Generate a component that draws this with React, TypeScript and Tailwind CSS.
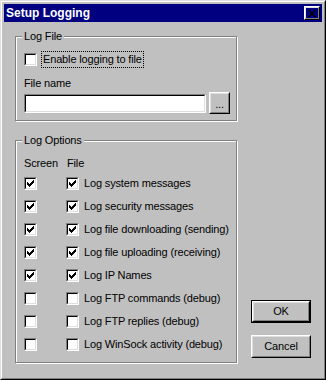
const rows = [
  { label: "Log system messages", on: true },
  { label: "Log security messages", on: true },
  { label: "Log file downloading (sending)", on: true },
  { label: "Log file uploading (receiving)", on: true },
  { label: "Log IP Names", on: true },
  { label: "Log FTP commands (debug)", on: false },
  { label: "Log FTP replies (debug)", on: false },
  { label: "Log WinSock activity (debug)", on: false },
];

const CheckMark = () => (
  <svg width="7" height="7" viewBox="0 0 7 7" shapeRendering="crispEdges">
    <path
      d="M6 0h1v1h-1z M5 1h2v1h-2z M0 2h1v1h-1z M4 2h3v1h-3z M0 3h2v1h-2z M3 3h3v1h-3z M0 4h5v1h-5z M1 5h3v1h-3z M2 6h1v1h-1z"
      fill="#000"
    />
  </svg>
);

const CloseGlyph = () => (
  <svg width="8" height="7" viewBox="0 0 8 7" shapeRendering="crispEdges">
    <path
      d="M0 0h2v1h-2z M6 0h2v1h-2z M1 1h2v1h-2z M5 1h2v1h-2z M2 2h4v1h-4z M3 3h2v1h-2z M2 4h4v1h-4z M1 5h2v1h-2z M5 5h2v1h-2z M0 6h2v1h-2z M6 6h2v1h-2z"
      fill="#000"
    />
  </svg>
);

const Check = ({ checked }: { checked: boolean }) => (
  <span className="flex h-[13px] w-[13px] shrink-0 border border-t-[#808080] border-l-[#808080] border-r-white border-b-white">
    <span className="flex flex-1 items-center justify-center border border-t-black border-l-black border-r-[#dfdfdf] border-b-[#dfdfdf] bg-white">
      {checked && <CheckMark />}
    </span>
  </span>
);

const Raised = ({ children, className }: { children: React.ReactNode; className: string }) => (
  <div className={`flex border border-t-white border-l-white border-r-black border-b-black ${className}`}>
    <div className="flex flex-1 items-center justify-center border border-t-[#dfdfdf] border-l-[#dfdfdf] border-r-[#808080] border-b-[#808080]">
      {children}
    </div>
  </div>
);

export default function App() {
  return (
    <div className="h-[380px] w-[326px] border border-t-[#dfdfdf] border-l-[#dfdfdf] border-r-black border-b-black bg-[#c0c0c0] font-['Liberation_Sans',Arial,sans-serif] text-[11px] leading-[13px] tracking-[-0.15px] text-black">
      <div className="flex h-full flex-col border border-t-white border-l-white border-r-[#808080] border-b-[#808080] p-[2px]">
        <div className="flex h-[18px] items-center justify-between bg-[#000080] pl-[2px] pr-[2px]">
          <span className="text-[12px] font-bold tracking-normal text-white">Setup Logging</span>
          <Raised className="h-[14px] w-[16px]">
            <CloseGlyph />
          </Raised>
        </div>

        <div className="flex">
          <div className="ml-[11px] flex w-[222px] flex-col">
            <fieldset className="mt-[8px] border border-[#808080] pb-[6px] pl-[8px] shadow-[1px_1px_0_#fff,inset_1px_1px_0_#fff]">
              <legend className="-ml-[2px] bg-[#c0c0c0] px-[2px]">Log File</legend>
              <div className="mt-[8px] flex h-[17px] items-center">
                <Check checked={false} />
                <span className="ml-[4px] flex h-[17px] items-center border border-dotted border-black px-[1px]">
                  Enable logging to file
                </span>
              </div>
              <div className="mt-[9px]">File name</div>
              <div className="mt-[2px] flex h-[22px] items-center">
                <div className="flex h-[19px] w-[182px] border border-t-[#808080] border-l-[#808080] border-r-white border-b-white">
                  <div className="flex-1 border border-t-black border-l-black border-r-[#dfdfdf] border-b-[#dfdfdf] bg-white" />
                </div>
                <Raised className="ml-[3px] h-[22px] w-[21px]">
                  <span className="pt-[2px]">...</span>
                </Raised>
              </div>
            </fieldset>

            <fieldset className="mt-[13px] border border-[#808080] pb-[6px] pl-[8px] shadow-[1px_1px_0_#fff,inset_1px_1px_0_#fff]">
              <legend className="-ml-[2px] bg-[#c0c0c0] px-[2px]">Log Options</legend>
              <div className="mt-[10px] flex">
                <span className="w-[43px]">Screen</span>
                <span>File</span>
              </div>
              <div className="mt-[2px] flex flex-col">
                {rows.map((r) => (
                  <div key={r.label} className="flex h-[23px] items-center">
                    <Check checked={r.on} />
                    <span className="ml-[29px]">
                      <Check checked={r.on} />
                    </span>
                    <span className="ml-[5px]">{r.label}</span>
                  </div>
                ))}
              </div>
            </fieldset>
          </div>

          <div className="ml-[14px] mt-[278px] flex flex-col gap-[12px]">
            <div className="flex h-[23px] w-[60px] border border-black">
              <div className="flex flex-1 border border-t-white border-l-white border-r-black border-b-black">
                <div className="flex flex-1 items-center justify-center border border-t-[#dfdfdf] border-l-[#dfdfdf] border-r-[#808080] border-b-[#808080]">
                  OK
                </div>
              </div>
            </div>
            <Raised className="h-[23px] w-[60px]">Cancel</Raised>
          </div>
        </div>
      </div>
    </div>
  );
}
